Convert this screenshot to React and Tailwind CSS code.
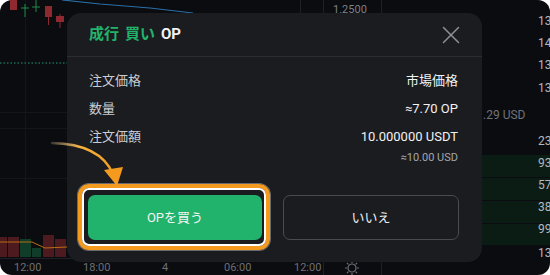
import { X } from "lucide-react";

const rightNums = [
  { y: 14, t: "13" },
  { y: 36, t: "14" },
  { y: 58, t: "13" },
  { y: 81, t: "13" },
  { y: 134, t: "23" },
  { y: 156, t: "93" },
  { y: 178, t: "57" },
  { y: 200, t: "38" },
  { y: 222, t: "99" },
  { y: 246, t: "13" },
];

const axis = [
  { x: 14, t: "12:00" },
  { x: 83, t: "18:00" },
  { x: 162, t: "4" },
  { x: 224, t: "06:00" },
  { x: 294, t: "12:00" },
];

function ChartBackground() {
  return (
    <>
      <svg className="absolute inset-0" width="550" height="275">
        {/* grid */}
        <g stroke="#15161b" strokeWidth="1">
          <line x1="25.5" y1="0" x2="25.5" y2="258" />
          <line x1="0" y1="112.5" x2="300" y2="112.5" />
          <line x1="0" y1="128.5" x2="300" y2="128.5" />
          <line x1="0" y1="178.5" x2="300" y2="178.5" />
        </g>
        <g stroke="#1f2025" strokeWidth="1">
          <line x1="300.5" y1="0" x2="300.5" y2="20" />
          <line x1="323.5" y1="0" x2="323.5" y2="275" />
          <line x1="381.5" y1="0" x2="381.5" y2="275" />
          <line x1="0" y1="258.5" x2="323" y2="258.5" />
        </g>
        {/* price line */}
        <line x1="0" y1="63" x2="67" y2="63" stroke="#1e6a55" strokeWidth="1.5" strokeDasharray="1.5 2" />
        {/* moving average */}
        <polyline points="62,0 100,4 150,8 193,13" fill="none" stroke="#2a6fa8" strokeWidth="1.2" />
        {/* candles */}
        <rect x="10" y="0" width="7" height="10" fill="#8f2930" />
        <line x1="25" y1="4" x2="25" y2="17" stroke="#1f8a4c" />
        <line x1="21" y1="8" x2="29" y2="8" stroke="#1f8a4c" />
        <line x1="36" y1="0" x2="36" y2="12" stroke="#1f8a4c" />
        <line x1="32" y1="7" x2="40" y2="7" stroke="#1f8a4c" />
        <line x1="48.5" y1="6" x2="48.5" y2="25" stroke="#8f2930" />
        <rect x="45" y="6" width="7" height="11" fill="#8f2930" />
        <line x1="60" y1="14" x2="60" y2="28" stroke="#8f2930" />
        <rect x="56" y="16" width="8" height="6" fill="#8f2930" />
        {/* volume */}
        <rect x="0" y="237" width="7" height="20" fill="#4d1a1f" />
        <rect x="8" y="237" width="11" height="20" fill="#4d1a1f" />
        <rect x="20" y="239" width="11" height="18" fill="#0f3d2a" />
        <rect x="32" y="248" width="9" height="9" fill="#0f3d2a" />
        <rect x="43" y="235" width="11" height="22" fill="#4d1a1f" />
        <rect x="55" y="239" width="11" height="18" fill="#4d1a1f" />
        <polyline points="0,242 32,242 45,248 67,247" fill="none" stroke="#b86d12" strokeWidth="1" />
        {/* order book rows */}
        <g fill="#0b1c15">
          <rect x="482" y="155" width="68" height="22" />
          <rect x="482" y="178" width="68" height="22" />
          <rect x="482" y="201" width="68" height="22" />
          <rect x="482" y="224" width="68" height="21" />
        </g>
        {/* settings */}
        <g transform="translate(352 268)" stroke="#6b6f76" fill="none" strokeWidth="1.2">
          <circle r="4" />
          <path d="M0-7v2M0 5v2M-7 0h2M5 0h2M-5-5l1.4 1.4M3.6 3.6L5 5M-5 5l1.4-1.4M3.6-3.6L5-5" />
        </g>
      </svg>
      <span className="absolute left-[333px] top-[3px] text-[11px] leading-[14px] text-[#7c8088]">1.2500</span>
      {rightNums.map((n) => (
        <span
          key={n.y}
          className="absolute left-[538px] text-[12px] leading-[14px] text-[#b4b8be]"
          style={{ top: n.y }}
        >
          {n.t}
        </span>
      ))}
      <span className="absolute left-[483px] top-[108px] text-[12px] leading-[14px] text-[#6f737a]">.29 USD</span>
      {axis.map((a) => (
        <span
          key={a.x}
          className="absolute top-[261px] text-[11px] leading-[14px] text-[#6b6f76]"
          style={{ left: a.x }}
        >
          {a.t}
        </span>
      ))}
    </>
  );
}

function Row({ label, value, sub }) {
  return (
    <div className="flex justify-between items-start">
      <span className="text-[13px] leading-[18px] text-[#c9ccd2]">{label}</span>
      <div className="flex flex-col items-end">
        <span className="text-[13px] leading-[18px] text-[#f1f2f4]">{value}</span>
        {sub && <span className="text-[11px] leading-[14px] mt-[5px] text-[#a3a7ae]">{sub}</span>}
      </div>
    </div>
  );
}

export default function App() {
  return (
    <div className="w-[550px] h-[275px] bg-white relative overflow-hidden font-['Roboto','Noto_Sans_CJK_JP',sans-serif]">
      <div className="absolute inset-0 rounded-[12px] bg-[#0b0c0f] overflow-hidden">
        <ChartBackground />

        {/* modal */}
        <div className="absolute left-[67px] top-[13px] w-[415px] h-[249px] rounded-[14px] bg-[#1b1c20] flex flex-col">
          <div className="h-[44px] flex items-center justify-between pl-[22px] pr-[16px] border-b border-[#2c2d32]">
            <div className="flex items-center gap-[6px] text-[15px] font-bold">
              <span className="text-[#22b36b]">成行</span>
              <span className="text-[#22b36b]">買い</span>
              <span className="text-[#f1f2f4]">OP</span>
            </div>
            <X size={30} strokeWidth={1.2} className="text-[#8d9097]" />
          </div>
          <div className="flex flex-col gap-[10px] pt-[15px] pl-[22px] pr-[24px]">
            <Row label="注文価格" value="市場価格" />
            <Row label="数量" value="≈7.70 OP" />
            <Row label="注文価額" value="10.000000 USDT" sub="≈10.00 USD" />
          </div>
          <div className="flex gap-[21px] pl-[21px] pr-[23px] mt-auto mb-[22px]">
            <button className="flex-1 h-[45px] rounded-[7px] bg-[#21b26c] text-[13px] text-[#f3f5f4]">
              OPを買う
            </button>
            <button className="flex-1 h-[45px] rounded-[7px] border border-[#4a4b51] text-[13px] text-[#eceef0]">
              いいえ
            </button>
          </div>
        </div>

        {/* highlight frame */}
        <div className="absolute left-[78px] top-[184px] w-[192px] h-[66px] rounded-[11px] border-[4px] border-[#f39a1f] shadow-[0_0_0_1px_rgba(255,255,255,0.35)]">
          <div className="w-full h-full rounded-[7px] border-[2px] border-white" />
        </div>

        {/* arrow */}
        <svg className="absolute inset-0 pointer-events-none" width="550" height="275">
          <defs>
            <linearGradient id="ag" x1="52" y1="143" x2="115" y2="178" gradientUnits="userSpaceOnUse">
              <stop offset="0" stopColor="#ffe3b0" stopOpacity="0.2" />
              <stop offset="0.35" stopColor="#f7b23e" />
              <stop offset="1" stopColor="#f39a1f" />
            </linearGradient>
          </defs>
          <path d="M52 143 Q100 144 113 174" fill="none" stroke="url(#ag)" strokeWidth="2.5" strokeLinecap="round" />
          <polygon points="104,170 123,167 117,186" fill="#f39a1f" />
        </svg>
      </div>
    </div>
  );
}
